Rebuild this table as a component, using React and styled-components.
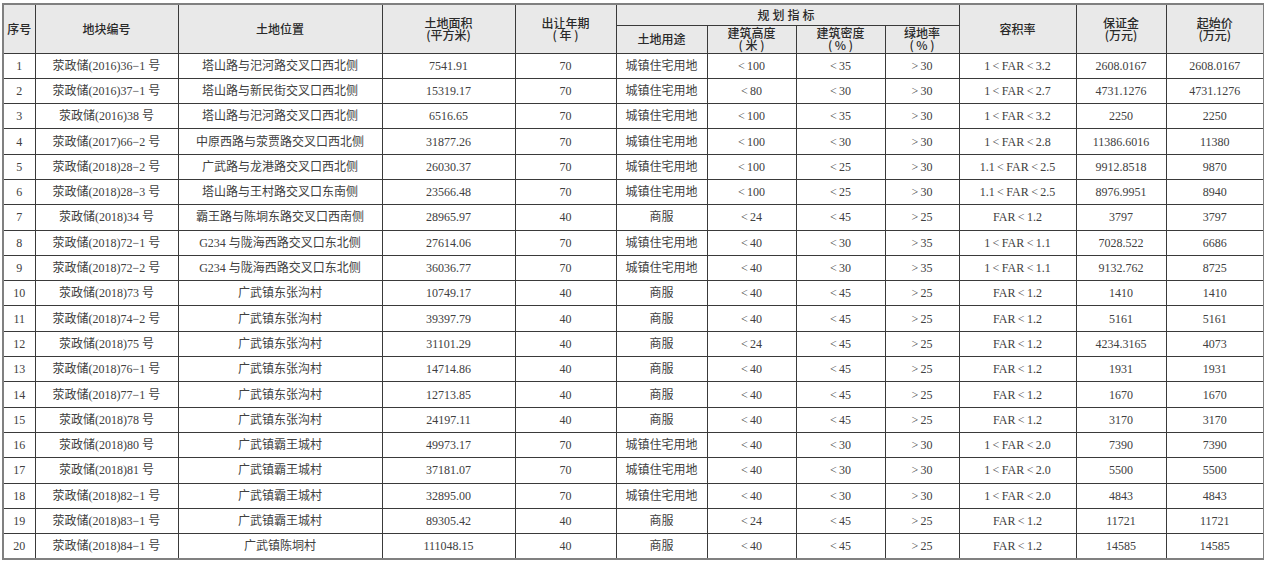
import React from "react";
import styled, { createGlobalStyle } from "styled-components";

const Global = createGlobalStyle`
  html, body { margin: 0; padding: 0; background: #fff; }
  body { font-family: "Liberation Serif", "Noto Sans CJK SC", serif; }
`;

const Page = styled.div`
  padding: 3px 0 0 2px;
`;

const Table = styled.table`
  border-collapse: collapse;
  table-layout: fixed;
  width: 1261px;
  border: 2px solid #808080;
`;

const HeadRow = styled.tr`
  height: ${(p) => p.$h}px;
`;

const HeadCell = styled.th`
  background: #e9e9e9;
  border: 1px solid #3a3a3a;
  font-family: "Noto Sans CJK SC", sans-serif;
  font-weight: 500;
  font-size: 12px;
  line-height: 12px;
  color: #2a2a2a;
  text-align: center;
  vertical-align: middle;
  padding: 0;
  letter-spacing: ${(p) => p.$ls || 0}px;
`;

const Sub = styled.span`
  display: block;
  line-height: 12px;
`;

const Row = styled.tr`
  height: 25.3px;
`;

const Cell = styled.td`
  border: 1px solid #3a3a3a;
  font-size: 12px;
  line-height: 14px;
  color: #404040;
  text-align: center;
  vertical-align: middle;
  padding: 0;
  white-space: nowrap;
  overflow: hidden;
`;

const widths = [32, 143, 204, 133, 101, 91, 89, 89, 74, 117, 90, 98];

const lt = "<\u2009";
const gt = ">\u2009";
const zz = "城镇住宅用地";
const sf = "商服";
const gz = "广武镇东张沟村";
const bw = "广武镇霸王城村";
const far = (a, b) => (a ? `${a}\u2009<\u2009FAR\u2009<\u2009${b}` : `FAR\u2009<\u2009${b}`);

const rows = [
  ["荥政储(2016)36−1 号", "塔山路与汜河路交叉口西北侧", "7541.91", "70", zz, "100", "35", "30", far("1", "3.2"), "2608.0167", "2608.0167"],
  ["荥政储(2016)37−1 号", "塔山路与新民街交叉口西北侧", "15319.17", "70", zz, "80", "30", "30", far("1", "2.7"), "4731.1276", "4731.1276"],
  ["荥政储(2016)38 号", "塔山路与汜河路交叉口西北侧", "6516.65", "70", zz, "100", "35", "30", far("1", "3.2"), "2250", "2250"],
  ["荥政储(2017)66−2 号", "中原西路与荥贾路交叉口西北侧", "31877.26", "70", zz, "100", "30", "30", far("1", "2.8"), "11386.6016", "11380"],
  ["荥政储(2018)28−2 号", "广武路与龙港路交叉口西北侧", "26030.37", "70", zz, "100", "25", "30", far("1.1", "2.5"), "9912.8518", "9870"],
  ["荥政储(2018)28−3 号", "塔山路与王村路交叉口东南侧", "23566.48", "70", zz, "100", "25", "30", far("1.1", "2.5"), "8976.9951", "8940"],
  ["荥政储(2018)34 号", "霸王路与陈垌东路交叉口西南侧", "28965.97", "40", sf, "24", "45", "25", far(null, "1.2"), "3797", "3797"],
  ["荥政储(2018)72−1 号", "G234 与陇海西路交叉口东北侧", "27614.06", "70", zz, "40", "30", "35", far("1", "1.1"), "7028.522", "6686"],
  ["荥政储(2018)72−2 号", "G234 与陇海西路交叉口东北侧", "36036.77", "70", zz, "40", "30", "35", far("1", "1.1"), "9132.762", "8725"],
  ["荥政储(2018)73 号", gz, "10749.17", "40", sf, "40", "45", "25", far(null, "1.2"), "1410", "1410"],
  ["荥政储(2018)74−2 号", gz, "39397.79", "40", sf, "40", "45", "25", far(null, "1.2"), "5161", "5161"],
  ["荥政储(2018)75 号", gz, "31101.29", "40", sf, "24", "45", "25", far(null, "1.2"), "4234.3165", "4073"],
  ["荥政储(2018)76−1 号", gz, "14714.86", "40", sf, "40", "45", "25", far(null, "1.2"), "1931", "1931"],
  ["荥政储(2018)77−1 号", gz, "12713.85", "40", sf, "40", "45", "25", far(null, "1.2"), "1670", "1670"],
  ["荥政储(2018)78 号", gz, "24197.11", "40", sf, "40", "45", "25", far(null, "1.2"), "3170", "3170"],
  ["荥政储(2018)80 号", bw, "49973.17", "70", zz, "40", "30", "30", far("1", "2.0"), "7390", "7390"],
  ["荥政储(2018)81 号", bw, "37181.07", "70", zz, "40", "30", "30", far("1", "2.0"), "5500", "5500"],
  ["荥政储(2018)82−1 号", bw, "32895.00", "70", zz, "40", "30", "30", far("1", "2.0"), "4843", "4843"],
  ["荥政储(2018)83−1 号", bw, "89305.42", "40", sf, "24", "45", "25", far(null, "1.2"), "11721", "11721"],
  ["荥政储(2018)84−1 号", "广武镇陈垌村", "111048.15", "40", sf, "40", "45", "25", far(null, "1.2"), "14585", "14585"],
];

export default function App() {
  return (
    <Page>
      <Global />
      <Table>
        <colgroup>
          {widths.map((w, i) => (
            <col key={i} style={{ width: w }} />
          ))}
        </colgroup>
        <thead>
          <HeadRow $h={21}>
            <HeadCell rowSpan={2}>序号</HeadCell>
            <HeadCell rowSpan={2}>地块编号</HeadCell>
            <HeadCell rowSpan={2}>土地位置</HeadCell>
            <HeadCell rowSpan={2}>
              <Sub>土地面积</Sub>
              <Sub>(平方米)</Sub>
            </HeadCell>
            <HeadCell rowSpan={2}>
              <Sub>出让年期</Sub>
              <Sub>( 年 )</Sub>
            </HeadCell>
            <HeadCell colSpan={4} $ls={3}>规划指标</HeadCell>
            <HeadCell rowSpan={2}>容积率</HeadCell>
            <HeadCell rowSpan={2}>
              <Sub>保证金</Sub>
              <Sub>(万元)</Sub>
            </HeadCell>
            <HeadCell rowSpan={2}>
              <Sub>起始价</Sub>
              <Sub>(万元)</Sub>
            </HeadCell>
          </HeadRow>
          <HeadRow $h={28}>
            <HeadCell>土地用途</HeadCell>
            <HeadCell>
              <Sub>建筑高度</Sub>
              <Sub>( 米 )</Sub>
            </HeadCell>
            <HeadCell>
              <Sub>建筑密度</Sub>
              <Sub>( % )</Sub>
            </HeadCell>
            <HeadCell>
              <Sub>绿地率</Sub>
              <Sub>( % )</Sub>
            </HeadCell>
          </HeadRow>
        </thead>
        <tbody>
          {rows.map((r, i) => (
            <Row key={i}>
              <Cell>{i + 1}</Cell>
              <Cell>{r[0]}</Cell>
              <Cell>{r[1]}</Cell>
              <Cell>{r[2]}</Cell>
              <Cell>{r[3]}</Cell>
              <Cell>{r[4]}</Cell>
              <Cell>{lt + r[5]}</Cell>
              <Cell>{lt + r[6]}</Cell>
              <Cell>{gt + r[7]}</Cell>
              <Cell>{r[8]}</Cell>
              <Cell>{r[9]}</Cell>
              <Cell>{r[10]}</Cell>
            </Row>
          ))}
        </tbody>
      </Table>
    </Page>
  );
}
